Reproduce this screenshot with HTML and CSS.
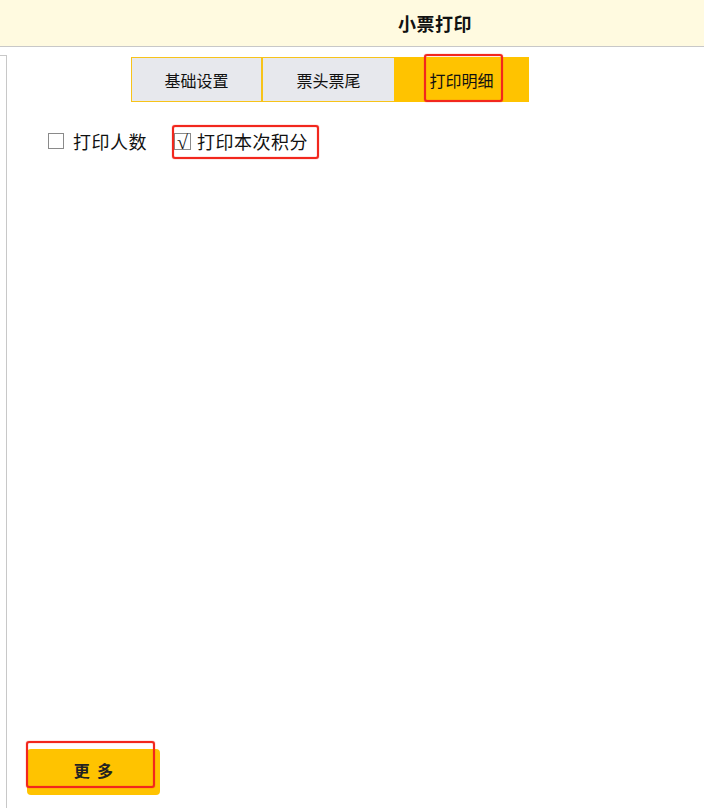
FILE: index.html
```html
<!DOCTYPE html>
<html lang="zh">
<head>
<meta charset="utf-8">
<title>小票打印</title>
<link rel="stylesheet" href="styles.css">
</head>
<body>
<div class="page">
  <header class="header"><h1 class="title">小票打印</h1></header>
  <div class="main">
    <div class="sidebar"></div>
    <div class="content">
      <div class="tabs">
        <div class="tab tab-first">基础设置</div>
        <div class="tab tab-second">票头票尾</div>
        <div class="tab tab-active">打印明细</div>
      </div>
      <div class="options">
        <label class="option"><span class="box"></span><span class="label">打印人数</span></label>
        <label class="option option-checked"><span class="box box-checked">√</span><span class="label">打印本次积分</span></label>
      </div>
      <div class="footer">
        <button class="more">更&nbsp;&nbsp;多</button>
      </div>
    </div>
  </div>
  <div class="mark mark-tab"></div>
  <div class="mark mark-option"></div>
  <div class="mark mark-more"></div>
</div>
</body>
</html>
```
FILE: styles.css
```css
* { box-sizing: border-box; }
html, body { margin: 0; padding: 0; background: #fff; }
body { font-family: "Noto Sans CJK SC", "Noto Sans", sans-serif; color: #111; }
.page { position: relative; width: 704px; height: 808px; overflow: hidden; display: flex; flex-direction: column; }
.header { height: 47px; background: #fffae0; border-bottom: 1px solid #c8c8c8; display: flex; align-items: center; justify-content: center; padding-left: 166px; flex: none; }
.title { margin: 0; font-size: 18px; font-weight: 700; letter-spacing: 0.5px; color: #111; line-height: 1; }
.main { flex: 1; display: flex; }
.sidebar { width: 7px; margin-top: 8px; border-top: 1px solid #c8c8c8; border-right: 1px solid #c8c8c8; flex: none; }
.content { flex: 1; display: flex; flex-direction: column; }
.tabs { display: flex; margin-top: 10px; margin-left: 124px; height: 45px; }
.tab { height: 45px; display: flex; align-items: center; justify-content: center; font-size: 16px; color: #111; background: #e7e8ed; border: 1px solid #f7c31a; }
.tab-first { width: 132px; border-right: 2px solid #f7c31a; }
.tab-second { width: 131px; border-left: none; border-right: none; }
.tab-active { width: 135px; background: #ffc300; border-color: #ffc300; }
.options { display: flex; align-items: center; margin-top: 26px; margin-left: 41px; gap: 26px; }
.option { display: flex; align-items: center; font-size: 18px; color: #111; }
.box { width: 16px; height: 16px; border: 1px solid #8a8a8a; display: inline-flex; align-items: center; justify-content: center; overflow: visible; }
.box-checked { width: 17px; height: 17px; margin-left: 1px; font-family: "Liberation Serif", "DejaVu Serif", serif; font-size: 20px; line-height: 1; color: #111; padding-top: 1px; }
.label { margin-left: 9px; letter-spacing: 0.5px; }
.option-checked .label { margin-left: 6px; }
.footer { margin-top: auto; margin-left: 20px; margin-bottom: 13px; }
.more { width: 133px; height: 46px; border: none; border-radius: 4px; background: #ffc300; font-family: "Noto Sans CJK SC", sans-serif; font-size: 16px; font-weight: 700; color: #222; padding: 0 0 4px 0; }
.mark { position: absolute; border: 2px solid #f2271d; border-radius: 3px; box-shadow: 0 0 1px #f2271d, inset 0 0 1px #f2271d; }
.mark-tab { left: 424px; top: 54px; width: 79px; height: 48px; }
.mark-option { left: 172px; top: 125px; width: 147px; height: 34px; }
.mark-more { left: 26px; top: 741px; width: 129px; height: 47px; }
```
